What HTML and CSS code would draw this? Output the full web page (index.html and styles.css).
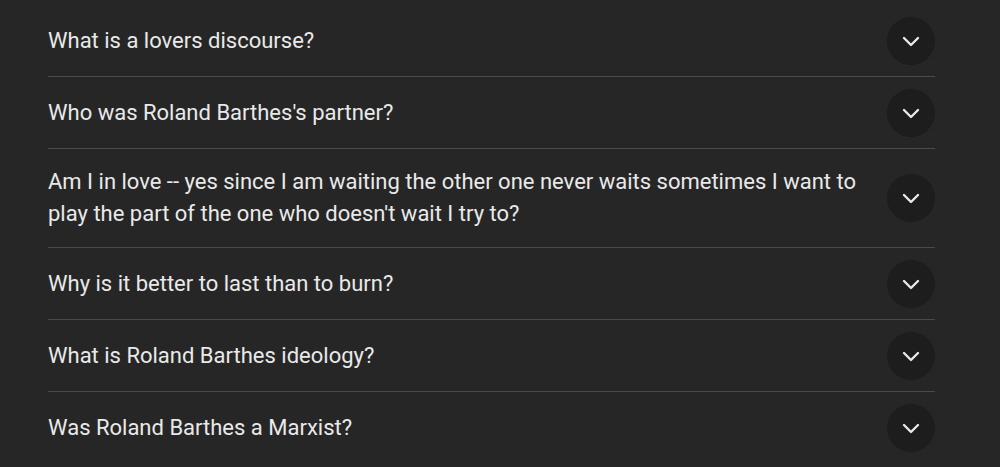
FILE: index.html
```html
<!DOCTYPE html>
<html lang="en">
<head>
<meta charset="utf-8">
<title>People also ask</title>
<link rel="stylesheet" href="styles.css">
</head>
<body>
<div class="faq">
  <div class="row"><span class="q">What is a lovers discourse?</span><span class="btn"><svg viewBox="0 0 24 24" width="24" height="24"><path d="M5 9l7 7 7-7" /></svg></span></div>
  <div class="row"><span class="q">Who was Roland Barthes's partner?</span><span class="btn"><svg viewBox="0 0 24 24" width="24" height="24"><path d="M5 9l7 7 7-7" /></svg></span></div>
  <div class="row"><span class="q">Am I in love -- yes since I am waiting the other one never waits sometimes I want to play the part of the one who doesn't wait I try to?</span><span class="btn"><svg viewBox="0 0 24 24" width="24" height="24"><path d="M5 9l7 7 7-7" /></svg></span></div>
  <div class="row"><span class="q">Why is it better to last than to burn?</span><span class="btn"><svg viewBox="0 0 24 24" width="24" height="24"><path d="M5 9l7 7 7-7" /></svg></span></div>
  <div class="row"><span class="q">What is Roland Barthes ideology?</span><span class="btn"><svg viewBox="0 0 24 24" width="24" height="24"><path d="M5 9l7 7 7-7" /></svg></span></div>
  <div class="row"><span class="q">Was Roland Barthes a Marxist?</span><span class="btn"><svg viewBox="0 0 24 24" width="24" height="24"><path d="M5 9l7 7 7-7" /></svg></span></div>
</div>
</body>
</html>
```
FILE: styles.css
```css
html, body {
  margin: 0;
  padding: 0;
  background: #262626;
  height: 100%;
  overflow: hidden;
}
body {
  font-family: Roboto, "Liberation Sans", sans-serif;
  color: #e9e9e9;
}
.faq {
  margin: 5px 0 0 48px;
  width: 887px;
}
.row {
  display: flex;
  align-items: center;
  gap: 16px;
  box-sizing: border-box;
  min-height: 72px;
  border-bottom: 1px solid #4a4a4a;
}
.row:last-child {
  border-bottom: none;
}
.q {
  flex: 1;
  padding: 17px 0;
  font-size: 22px;
  line-height: 32px;
}
.btn {
  flex: 0 0 48px;
  width: 48px;
  height: 48px;
  border-radius: 50%;
  background: #1d1d1d;
  display: flex;
  align-items: center;
  justify-content: center;
}
.btn svg {
  fill: none;
  stroke: #e8e8ea;
  stroke-width: 2.4;
  stroke-linecap: round;
  stroke-linejoin: round;
}
```
